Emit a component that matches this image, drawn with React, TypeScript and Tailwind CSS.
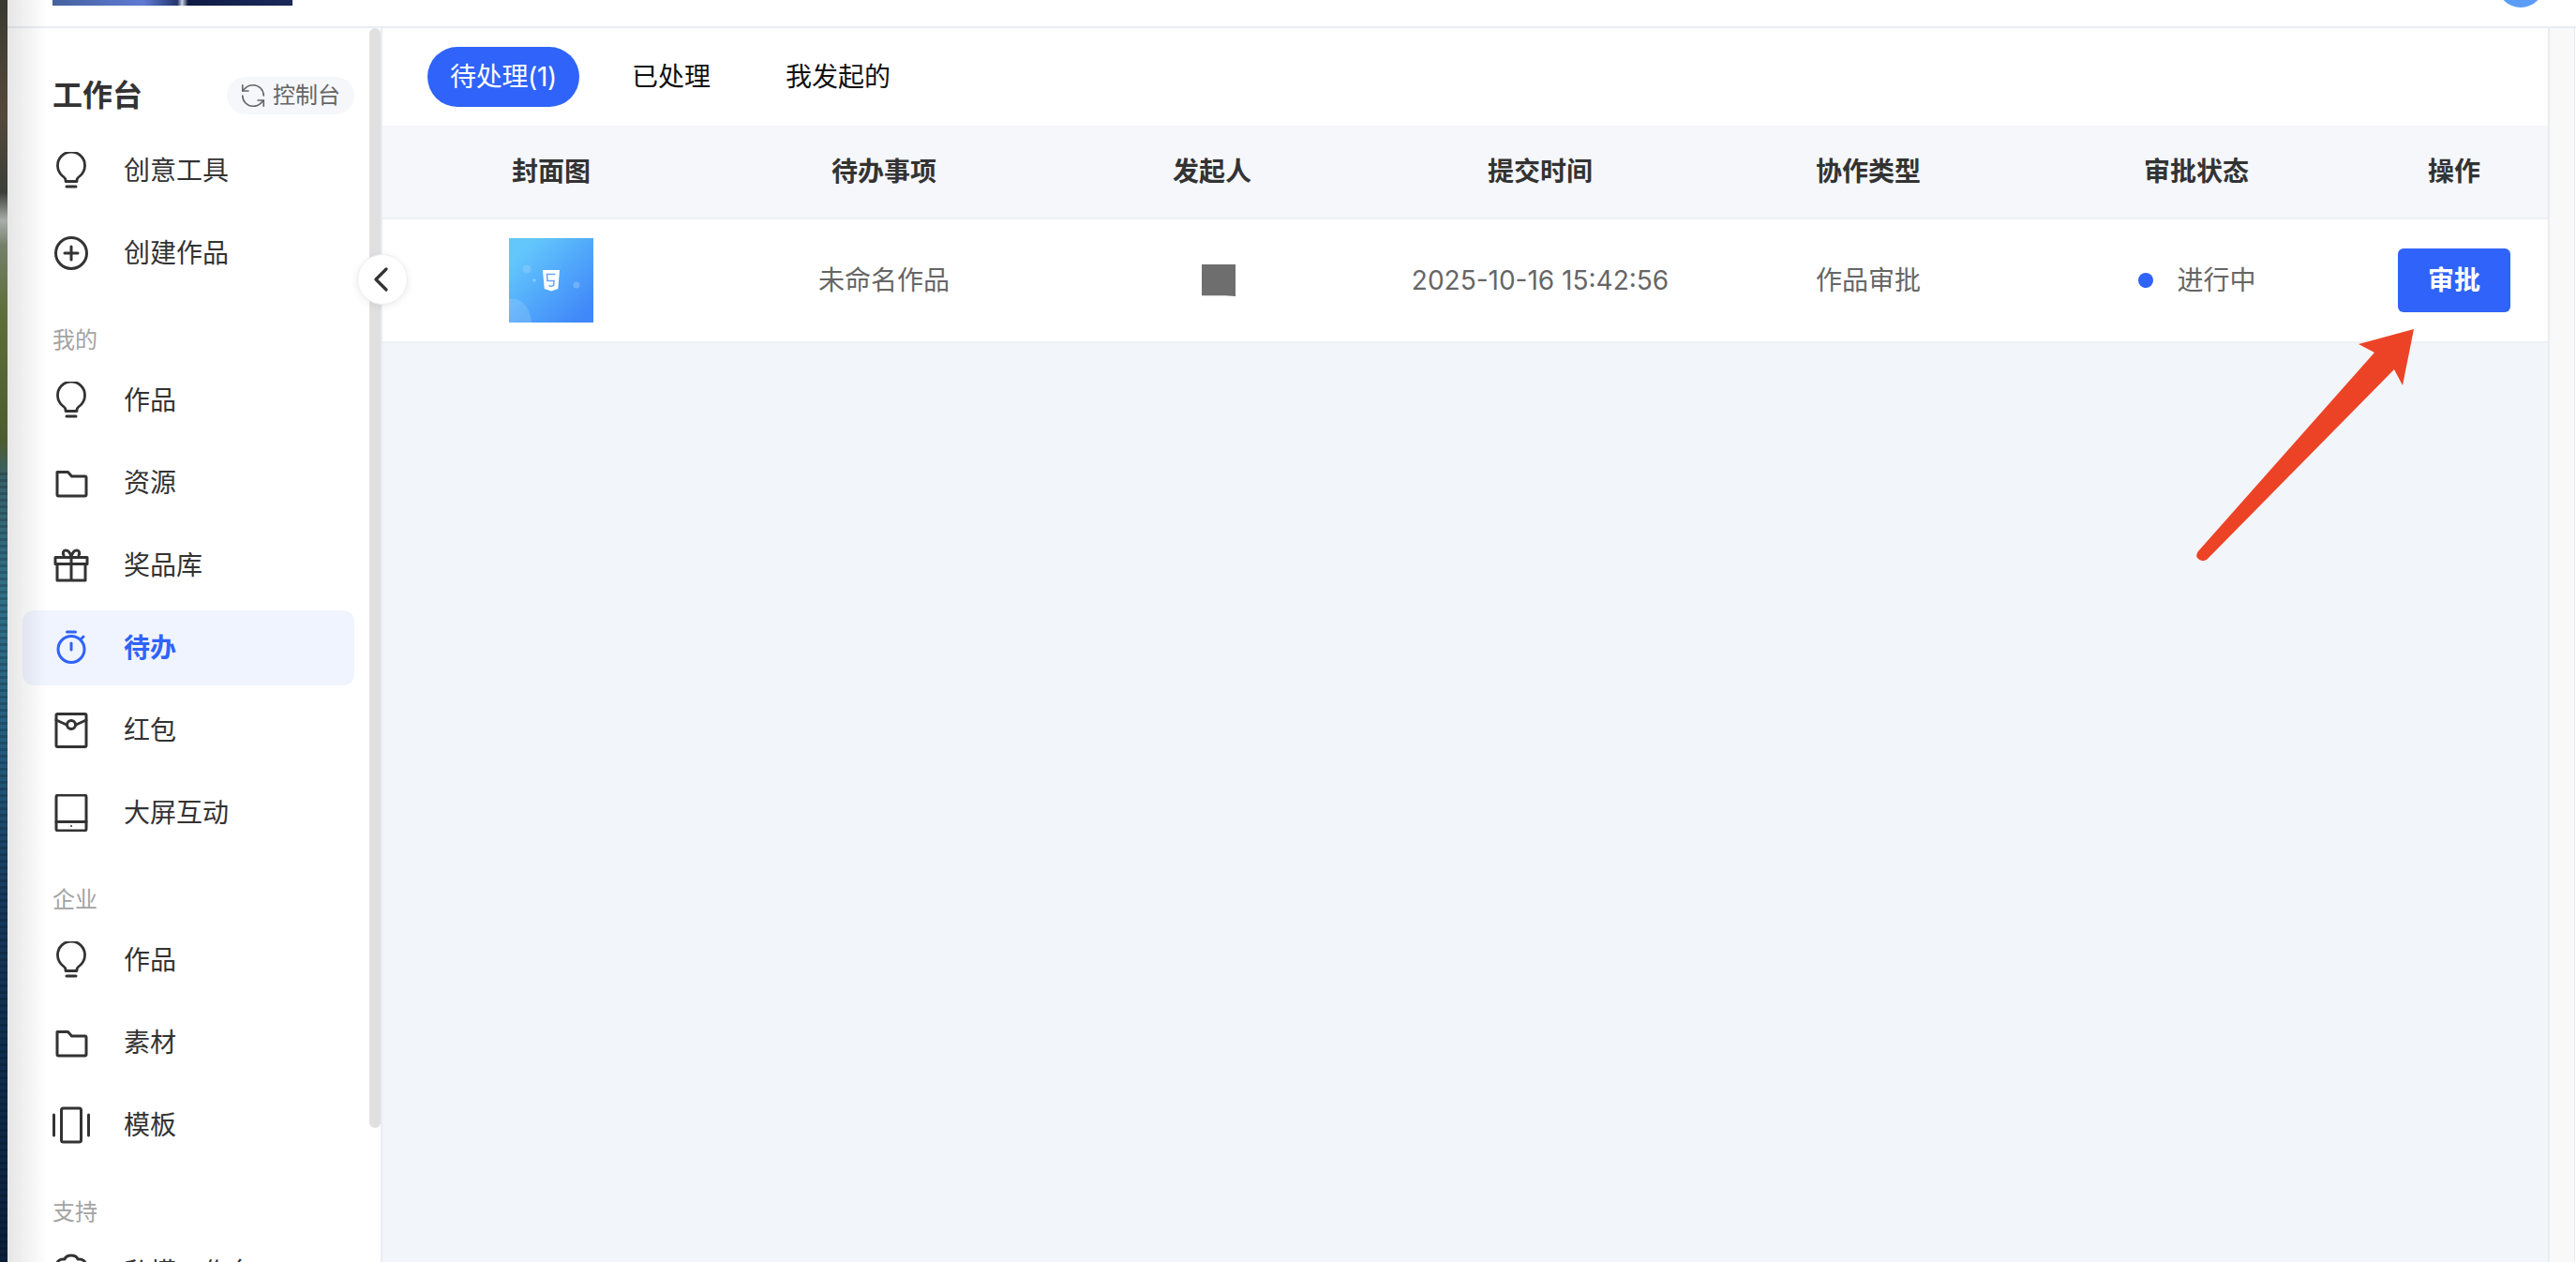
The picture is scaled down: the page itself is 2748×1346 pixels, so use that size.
import { RefreshCcw } from "lucide-react";
import type { ReactNode } from "react";

const FONT = "font-['Inter','Noto_Sans_CJK_SC',sans-serif]";

function Icon({ children }: { children: ReactNode }) {
  return (
    <svg viewBox="0 0 40 40" className="w-10 h-10 shrink-0" fill="none" stroke="currentColor" strokeWidth="3" strokeLinecap="round" strokeLinejoin="round">
      {children}
    </svg>
  );
}

const Bulb = () => (
  <Icon>
    <path d="M14 31.500v-1.500c0-2-1.500-3-3.500-4.500A14.500 14.500 0 1 1 29.500 25.500c-2 1.500-3.500 2.500-3.500 4.500v1.500z" strokeWidth="2.800" />
    <path d="M15 37h10" />
  </Icon>
);
const PlusCircle = () => (
  <Icon>
    <circle cx="20" cy="20" r="16.500" />
    <path d="M20 13v14M13 20h14" />
  </Icon>
);
const Folder = () => (
  <Icon>
    <path d="M5 8.500h11.500l4 4.500h14c.8 0 1.500.7 1.500 1.500v18c0 .8-.7 1.500-1.500 1.500h-28c-.8 0-1.500-.7-1.500-1.500z" />
  </Icon>
);
const Gift = () => (
  <Icon>
    <path d="M3 11.500h34v7H3zM5 18.500v17.500h30V18.500M20 11.500V36" />
    <path d="M20 11c-1-4-3-7-6-7-2.500 0-3.500 3-2 5M20 11c1-4 3-7 6-7 2.500 0 3.500 3 2 5" />
  </Icon>
);
const Stopwatch = () => (
  <Icon>
    <path d="M15.500 3h9" />
    <circle cx="20" cy="21.500" r="14" />
    <path d="M20 15v7M33 8l-2.500 2.500" />
  </Icon>
);
const Envelope = () => (
  <Icon>
    <rect x="4" y="2.500" width="32" height="35" rx="1.500" />
    <path d="M4 9l11 5M36 9l-11 5" />
    <circle cx="20" cy="14" r="4.500" />
  </Icon>
);
const Tablet = () => (
  <Icon>
    <rect x="4" y="1" width="32" height="38" rx="2" />
    <path d="M4 29.500h32" />
    <circle cx="20" cy="34" r="1" fill="currentColor" stroke="none" />
  </Icon>
);
const Cards = () => (
  <Icon>
    <rect x="9.500" y="2" width="21" height="36" rx="2" />
    <path d="M1.500 9v22M38.500 9v22" />
  </Icon>
);
const Studio = () => (
  <Icon>
    <path d="M5 11c0-3 3-5 6-5h2c1-3 3-4 7-4s6 1 7 4h2c3 0 6 2 6 5v25H5z" />
    <path d="M5 12h30" />
  </Icon>
);

function NavItem({ icon, label, active }: { icon: ReactNode; label: string; active?: boolean }) {
  return (
    <div className={`flex items-center h-20 mb-2 pl-8 rounded-xl text-[28px] leading-10 ${active ? "bg-[#f0f4fe] text-[#2f63f9] font-semibold" : "text-[#333]"}`}>
      {icon}
      <span className="ml-9 whitespace-nowrap">{label}</span>
    </div>
  );
}

function SectionLabel({ children }: { children: ReactNode }) {
  return <div className="h-[69px] pt-[27px] pl-[32px] text-2xl leading-9 text-[#a3a3a3]">{children}</div>;
}

function Sidebar() {
  return (
    <aside className="relative w-[400px] shrink-0 border-r-2 border-[#e9edf2] bg-white overflow-hidden">
      <div className="pt-[52px] pl-4 pr-[28px]">
        <div className="flex items-center justify-between h-10 mb-5">
          <span className="pl-[32px] text-[32px] leading-10 font-bold text-[#333]">工作台</span>
          <span className="flex items-center gap-1.5 h-10 pl-[13px] pr-[15px] rounded-full bg-[#f5f7fa] text-2xl text-[#666]">
            <RefreshCcw size={30} strokeWidth={1.3} />
            控制台
          </span>
        </div>
        <NavItem icon={<Bulb />} label="创意工具" />
        <NavItem icon={<PlusCircle />} label="创建作品" />
        <SectionLabel>我的</SectionLabel>
        <NavItem icon={<Bulb />} label="作品" />
        <NavItem icon={<Folder />} label="资源" />
        <NavItem icon={<Gift />} label="奖品库" />
        <NavItem icon={<Stopwatch />} label="待办" active />
        <NavItem icon={<Envelope />} label="红包" />
        <NavItem icon={<Tablet />} label="大屏互动" />
        <SectionLabel>企业</SectionLabel>
        <NavItem icon={<Bulb />} label="作品" />
        <NavItem icon={<Folder />} label="素材" />
        <NavItem icon={<Cards />} label="模板" />
        <SectionLabel>支持</SectionLabel>
        <NavItem icon={<Studio />} label="私模工作台" />
      </div>
      {/* scrollbar thumb */}
      <div className="absolute right-0 top-0 w-3 h-[1173px] rounded-full bg-[#e0e0e0]" />
    </aside>
  );
}

function Thumbnail() {
  return (
    <svg viewBox="0 0 90 90" className="w-[90px] h-[90px]">
      <defs>
        <linearGradient id="thumb" x1="0" y1="0" x2="1" y2="1">
          <stop offset="0.15" stopColor="#63c7fc" />
          <stop offset="0.9" stopColor="#3f88f9" />
        </linearGradient>
      </defs>
      <rect width="90" height="90" fill="url(#thumb)" />
      <path d="M0 65c12-2 22 6 24 25H0z" fill="#fff" opacity="0.14" />
      <circle cx="19" cy="33" r="4.500" fill="#fff" opacity="0.15" />
      <circle cx="27" cy="45" r="1.800" fill="#fff" opacity="0.3" />
      <circle cx="72" cy="50" r="3.500" fill="#fff" opacity="0.22" />
      <path d="M36 34h18l-1.700 20-7.300 2.500-7.300-2.500z" fill="#fff" />
      <path d="M49.500 38.500h-9l.5 7h7l-.5 5-2.500 1-2.500-1" fill="none" stroke="#6aa6fa" strokeWidth="1.600" />
    </svg>
  );
}

function Cell({ children, className = "" }: { children: ReactNode; className?: string }) {
  return <div className={`flex items-center justify-center ${className}`}>{children}</div>;
}

const COLS = "grid grid-cols-[360px_350px_350px_350px_350px_350px_200px]";

function Main() {
  return (
    <main className="flex flex-col w-[2312px] shrink-0 border-r-2 border-[#e9edf2] bg-[#f2f5fa]">
      <div className="flex items-start gap-8 h-[104px] pt-5 pl-12 bg-white text-[28px] text-[#111]">
        <button className="w-[162px] h-16 rounded-full bg-[#2f63f9] text-white tracking-[-0.3px]">待处理(1)</button>
        <button className="h-16 px-6">已处理</button>
        <button className="h-16 px-6">我发起的</button>
      </div>
      <div className={`${COLS} h-[100px] bg-[#f5f7fa] border-b-2 border-[#eef0f4] text-[28px] font-semibold text-[#333]`}>
        {["封面图", "待办事项", "发起人", "提交时间", "协作类型", "审批状态", "操作"].map((h) => (
          <Cell key={h}>{h}</Cell>
        ))}
      </div>
      <div className={`${COLS} h-[132px] bg-white border-b-2 border-[#eef0f4] text-[28px] text-[#666]`}>
        <Cell><Thumbnail /></Cell>
        <Cell>未命名作品</Cell>
        <Cell className="pl-[14px]">
          <svg viewBox="0 0 36 34" className="w-9 h-[34px]"><path d="M0 0h36v34l-11-.7H0z" fill="#6e6e6e" /></svg>
        </Cell>
        <Cell>2025-10-16 15:42:56</Cell>
        <Cell>作品审批</Cell>
        <Cell className="gap-[25px] pl-[2px]">
          <span className="w-4 h-4 rounded-full bg-[#2f63f9]" />
          进行中
        </Cell>
        <Cell>
          <button className="w-[120px] h-[68px] rounded-md bg-[#2f63f9] text-white font-semibold">审批</button>
        </Cell>
      </div>
    </main>
  );
}

export default function App() {
  return (
    <div className={`relative flex h-screen overflow-hidden bg-white ${FONT}`}>
      {/* desktop wallpaper showing at the window edge */}
      <div className="w-2 shrink-0 bg-[linear-gradient(180deg,#3a3a30_0px,#54483a_120px,#3c3f38_205px,#a8aeaa_235px,#75806a_262px,#5f6f3a_330px,#4c5c2e_470px,#35606a_510px,#2f7088_640px,#235a7c_800px,#15395c_960px,#0e2c4c_1150px,#0a1f3a_1346px)]">
        <div className="h-[846px] mt-[500px] bg-[repeating-linear-gradient(180deg,transparent_0px,transparent_4px,rgba(0,0,0,0.18)_4px,rgba(0,0,0,0.18)_7px)]" />
      </div>
      <div className="relative flex flex-col flex-1 min-w-0">
        <header className="flex justify-between shrink-0 h-[30px] pl-12 pr-[34px] border-b-2 border-[#e9edf2] overflow-hidden bg-white">
          <div className="w-64 h-1.5 bg-[linear-gradient(90deg,#46619f_0%,#5f7ad2_38%,#24366f_52%,#c9d0e2_54%,#0f1b44_56.5%,#1a2a5a_100%)]" />
          <div className="w-[50px] h-[50px] -mt-[42px] rounded-full bg-[#5b9df6]" />
        </header>
        <div className="flex flex-1 min-h-0">
          <Sidebar />
          <Main />
          <div className="flex-1 bg-[#f9f9f9] border-r border-[#e9edf2] mr-px" />
        </div>
        {/* window edge shadow */}
        <div className="absolute left-0 top-0 bottom-0 w-[42px] bg-gradient-to-r from-black/10 to-transparent pointer-events-none" />
      </div>
      <button className="absolute left-[381px] top-[271px] flex items-center justify-center w-[54px] h-[54px] pr-1 rounded-full bg-white border border-[#eeeeee] shadow-[0_2px_8px_rgba(0,0,0,0.08)] text-[#333]">
        <svg viewBox="0 0 16 26" className="w-4 h-[26px]" fill="none" stroke="currentColor" strokeWidth="3.200" strokeLinecap="round" strokeLinejoin="round">
          <path d="M14 2 3 13l11 11" />
        </svg>
      </button>
      {/* red annotation arrow */}
      <svg viewBox="2340 348 240 252" className="absolute left-[2340px] top-[348px] w-60 h-[252px] pointer-events-none">
        <path d="M2575 351 2516 367 2533 376 2345 588Q2342 592 2344 595 2348 600 2354 597L2554 394 2563 411z" fill="#ec4326" />
      </svg>
    </div>
  );
}
